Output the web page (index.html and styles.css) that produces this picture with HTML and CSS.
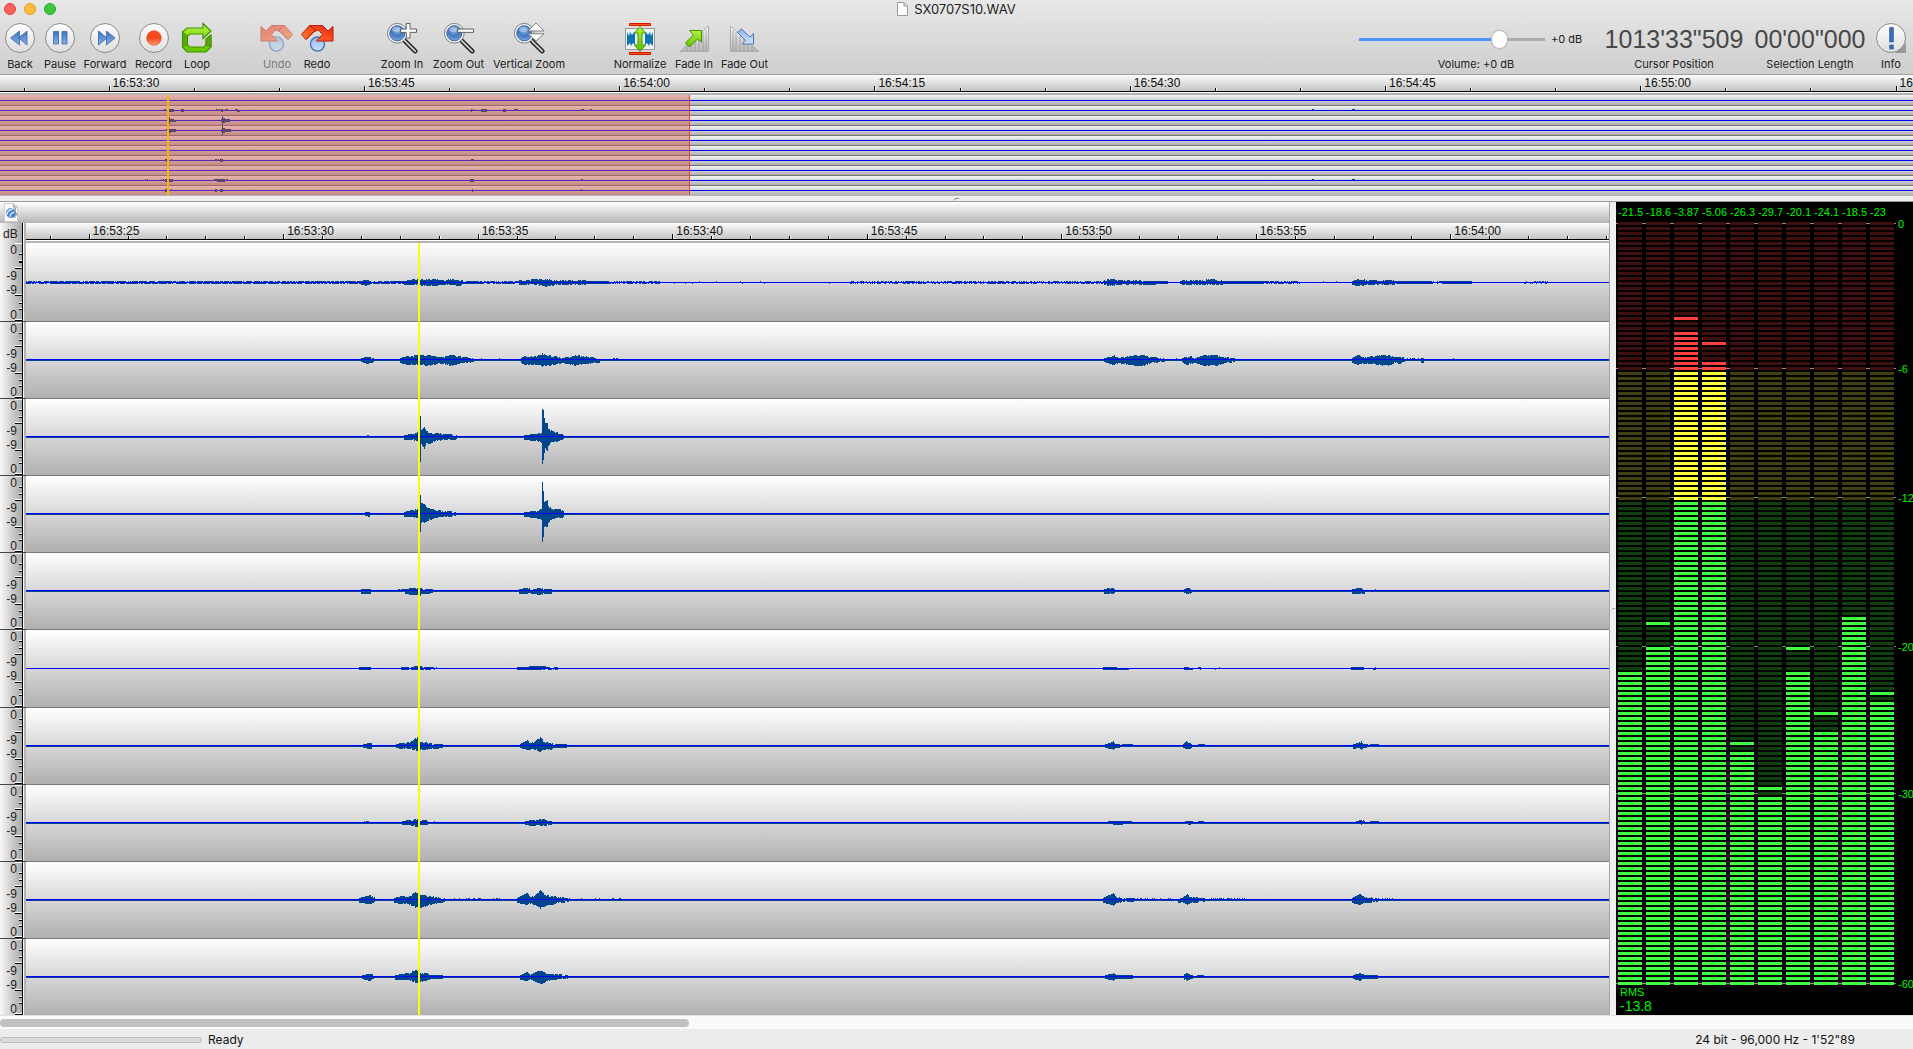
FILE: index.html
```html
<!DOCTYPE html>
<html lang="en">
<head>
<meta charset="utf-8">
<title>SX0707S10.WAV</title>
<link rel="stylesheet" href="styles.css">
</head>
<body>
<svg class="defs" aria-hidden="true">
  <defs>
    <linearGradient id="g-btn" x1="0" y1="0" x2="0" y2="1"><stop offset="0" stop-color="#fff"/><stop offset="1" stop-color="#dedede"/></linearGradient>
    <linearGradient id="g-blue" x1="0" y1="0" x2="0" y2="1"><stop offset="0" stop-color="#3f73bd"/><stop offset="1" stop-color="#86b1ea"/></linearGradient>
    <linearGradient id="g-sky" x1="0" y1="0" x2="0" y2="1"><stop offset="0" stop-color="#8db4ec"/><stop offset="1" stop-color="#cfe3fb"/></linearGradient>
    <linearGradient id="g-rec" x1="0" y1="0" x2="0" y2="1"><stop offset="0" stop-color="#ff4a1c"/><stop offset=".5" stop-color="#f0481e"/><stop offset="1" stop-color="#ffa06c"/></linearGradient>
    <linearGradient id="g-red" x1="0" y1="0" x2="1" y2="1"><stop offset="0" stop-color="#e02412"/><stop offset=".6" stop-color="#ff5a1e"/><stop offset="1" stop-color="#ff8a3a"/></linearGradient>
    <linearGradient id="g-green" x1="0" y1="0" x2="0" y2="1"><stop offset="0" stop-color="#b6f23e"/><stop offset="1" stop-color="#5fc400"/></linearGradient>
    <linearGradient id="g-ramp" x1="0" y1="0" x2="0" y2="1"><stop offset="0" stop-color="#fafafa"/><stop offset="1" stop-color="#b5b5b5"/></linearGradient>
    <radialGradient id="g-lens" cx=".5" cy=".3" r=".8"><stop offset="0" stop-color="#7fa9e2"/><stop offset=".5" stop-color="#4376be"/><stop offset="1" stop-color="#8dbcf2"/></radialGradient>
    <symbol id="i-undo" viewBox="0 0 34 32">
      <circle cx="16.500" cy="22" r="7" fill="url(#g-sky)" stroke="#4d79b8" stroke-width="1.500"/>
      <path d="M11.500 3.500h13l8 9-4.500 5-8-8-4.500-1.500-4 4.500 6 6.500H1V4.500l5 4.500z" fill="url(#g-red)" stroke="#b81a10"/>
      <path d="M24.500 3.500L18 8.500l2 1 8 8M6 9l5.500-5.500" fill="none" stroke="#b81a10"/>
    </symbol>
    <symbol id="i-lens" viewBox="0 0 34 34">
      <path d="M20 20l11 11" stroke="#222" stroke-width="5" stroke-linecap="round"/>
      <path d="M19 19l12 12" stroke="#ccc" stroke-width="2" stroke-linecap="round"/>
      <circle cx="12" cy="12" r="10.500" fill="#f2f2f2" stroke="#777"/>
      <circle cx="12" cy="12" r="8" fill="url(#g-lens)" stroke="#355f9f"/>
      <ellipse cx="11" cy="8" rx="4.500" ry="3" fill="#fff" opacity=".35"/>
    </symbol>
  </defs>
</svg>

<header class="header">
  <div class="titlebar">
    <div class="lights">
      <button class="light light-close" aria-label="Close"></button>
      <button class="light light-min" aria-label="Minimize"></button>
      <button class="light light-max" aria-label="Zoom window"></button>
    </div>
    <h1 class="title">
      <svg width="11" height="14" viewBox="0 0 11 14"><path d="M.5.5h6.500l3.500 3.500v9.500H.5z" fill="#fff" stroke="#999"/><path d="M7 .5V4h3.500" fill="#ddd" stroke="#999"/></svg>
      SX0707S10.WAV
    </h1>
  </div>
  <div class="toolbar">
    <div class="group group-transport">
      <button class="tool"><svg width="32" height="32" viewBox="0 0 32 32"><circle cx="16" cy="16" r="14.500" fill="url(#g-btn)" stroke="#8a8a8a"/><path d="M15.500 9v14l-9-7zM23 9v14l-8.500-7z" fill="url(#g-blue)" stroke="#3866ab" stroke-width=".8"/></svg>Back</button>
      <button class="tool"><svg width="32" height="32" viewBox="0 0 32 32"><circle cx="16" cy="16" r="14.500" fill="url(#g-btn)" stroke="#8a8a8a"/><path d="M9.500 9.500h5v12.500h-5zM18 9.500h5v12.500h-5z" fill="url(#g-blue)" stroke="#3866ab" stroke-width=".8"/></svg>Pause</button>
      <button class="tool"><svg width="32" height="32" viewBox="0 0 32 32"><circle cx="16" cy="16" r="14.500" fill="url(#g-btn)" stroke="#8a8a8a"/><path d="M9.500 9v14l8.500-7zM17.500 9v14l8.500-7z" fill="url(#g-blue)" stroke="#3866ab" stroke-width=".8"/></svg>Forward</button>
      <button class="tool"><svg width="32" height="32" viewBox="0 0 32 32"><circle cx="16" cy="16" r="14.500" fill="url(#g-btn)" stroke="#8a8a8a"/><circle cx="16" cy="16" r="7.300" fill="url(#g-rec)" stroke="#d9431c" stroke-width=".6"/></svg>Record</button>
      <button class="tool"><svg width="32" height="32" viewBox="0 0 32 32"><path d="M6 6h16V1.500L30 9l-8 7.500V12H9L6.500 14v9L9 25h14l2-2v-6l5-4v12l-5 5H6l-4.500-5V10z" fill="url(#g-green)" stroke="#3f9400" stroke-width="1.200"/><path d="M1.500 10l5 4v9l-5 2zM25 17l5-4v12l-5-2z" fill="#58a80c" stroke="#3f8a00" stroke-width=".7"/></svg>Loop</button>
    </div>
    <div class="group group-history">
      <button class="tool" disabled><svg width="34" height="32"><use href="#i-undo"/></svg>Undo</button>
      <button class="tool"><svg width="34" height="32" viewBox="0 0 34 32"><g transform="translate(34 0) scale(-1 1)"><use href="#i-undo" width="34" height="32"/></g></svg>Redo</button>
    </div>
    <div class="group group-zoom">
      <button class="tool"><svg width="34" height="32" viewBox="0 0 34 34"><use href="#i-lens" width="34" height="34"/><path d="M21.500 1.500h4v6h7v3.500h-7v6h-4v-6h-6V7.500h6z" fill="#fff" stroke="#555"/></svg>Zoom In</button>
      <button class="tool"><svg width="34" height="32" viewBox="0 0 34 34"><use href="#i-lens" width="34" height="34"/><path d="M15.500 7.500h17V11h-17z" fill="#fff" stroke="#555"/></svg>Zoom Out</button>
      <button class="tool"><svg width="34" height="32" viewBox="0 0 34 34"><use href="#i-lens" width="34" height="34"/><path d="M16 9.500l8.500-8.500L33 9.500zM16 12.500h17L24.500 20z" fill="#fff" stroke="#777"/></svg>Vertical Zoom</button>
    </div>
    <div class="group group-process">
      <button class="tool"><svg width="32" height="34" viewBox="0 0 32 34"><rect x="1.500" y="6.500" width="29" height="21" fill="#eef3f6" stroke="#999"/><path d="M3 10l2 4 1-4 2 3 2-3 1 2v11l-2-2-2 3-1-3-3 3zM29 10l-2 4-1-4-2 3-2-3-1 2v11l2-2 2 3 1-3 3 3z" fill="#0d75b0"/><path d="M16 4.500l5.500 6.500H18v12h3.500L16 29.500 10.500 23H14V11h-3.500z" fill="url(#g-green)" stroke="#3f9400"/><path d="M5.500 1.500h21v2h-21zM5.500 30.500h21v2h-21z" fill="#ff5a20" stroke="#d41500"/></svg>Normalize</button>
      <button class="tool"><svg width="32" height="32" viewBox="0 0 32 32"><path d="M2 29.500L30.500 4v25.500z" fill="url(#g-ramp)" stroke="#aaa"/><path d="M9 24v5M13 20v9M17 17v12M21 14v15M25 10v19M28 8v21" stroke="#999" stroke-width=".8"/><path d="M7.500 21l8-8-4-4.500H23.500V20l-4-3-8 8z" fill="url(#g-green)" stroke="#3f9400"/></svg>Fade In</button>
      <button class="tool"><svg width="32" height="32" viewBox="0 0 32 32"><path d="M30 29.500L1.500 4v25.500z" fill="url(#g-ramp)" stroke="#aaa"/><path d="M4 8v21M7 10v19M11 14v15M15 17v12M19 20v9M23 24v5" stroke="#999" stroke-width=".8"/><path d="M8.500 10.500l4-3.500 8.500 8 3.500-3.500V22H13l3.500-3.500z" fill="url(#g-sky)" stroke="#4d79b8"/></svg>Fade Out</button>
    </div>
    <div class="group group-status">
      <div class="volume">
        <div class="volume-row"><input class="slider" id="volume" type="range" min="0" max="1000" value="775"><output for="volume">+0 dB</output></div>
        <label for="volume">Volume: +0 dB</label>
      </div>
      <div class="readout"><span class="digits">1013'33"509</span>Cursor Position</div>
      <div class="readout"><span class="digits">00'00"000</span>Selection Length</div>
      <button class="tool"><svg width="32" height="32" viewBox="0 0 32 32"><path d="M31 21v10H20z" fill="#999"/><circle cx="16" cy="16" r="14.500" fill="url(#g-btn)" stroke="#8a8a8a"/><path d="M14.500 5.500h4v14.500h-4zM14.500 23h4v4h-4z" fill="#3b6cb8" stroke="#2f5ca4" stroke-width=".6"/></svg>Info</button>
    </div>
  </div>
</header>

<section class="overview" aria-label="Overview">
  <div class="ruler" id="ruler-overview"></div>
  <div class="lanes-mini" id="lanes-mini">
    <div class="selection"></div>
    <div class="cursor cursor-mini"></div>
  </div>
</section>
<div class="split-h"><svg width="7" height="4" viewBox="0 0 7 4"><path d="M0 4q2-4 5-3l2 1H3z" fill="#888"/></svg></div>

<main class="main">
  <section class="editor" aria-label="Tracks">
    <div class="strip"><button class="strip-button" aria-label="Track options"><svg width="14" height="19" viewBox="0 0 14 19"><path d="M.5.500h9L13.500 4v14.500H.5z" fill="#fff" stroke="#ccc"/><path d="M9.500.5V4h4" fill="#ddd" stroke="#aaa"/><circle cx="7" cy="10" r="5" fill="#3f83d2"/><path d="M3 12q0-5 6-6M6 14q0-4 5-5" stroke="#dceafb" stroke-width="1.300" fill="none"/><path d="M9 3l3 3-2 3 3 2-3 4" stroke="#888" fill="none"/></svg></button></div>
    <div class="editor-ruler"><div class="unit">dB</div><div class="ruler" id="ruler-main"></div></div>
    <div class="editor-body">
      <div class="scales rows" id="scales"></div>
      <div class="lanes rows" id="lanes"><div class="cursor cursor-main"></div></div>
    </div>
  </section>
  <div class="split-v"><svg width="5" height="4" viewBox="0 0 7 4"><path d="M0 4q2-4 5-3l2 1H3z" fill="#888"/></svg></div>
  <aside class="meter" aria-label="Level meter">
    <div class="peaks" id="peaks"></div>
    <div class="bars" id="bars"></div>
    <div class="rms">RMS</div>
    <div class="rms-value">-13.8</div>
  </aside>
</main>

<div class="scroller"><div class="thumb"></div></div>
<footer class="footer">
  <progress class="progress" value="0" max="1" aria-label="Progress"></progress>
  <span class="state">Ready</span>
  <span class="format">24 bit - 96,000 Hz - 1'52"89</span>
</footer>
<script src="app.js"></script>
</body>
</html>
```

FILE: styles.css
```css
* { box-sizing: border-box; }
body {
  margin: 0;
  height: 100vh;
  display: flex;
  flex-direction: column;
  overflow: hidden;
  background: #ececec;
  color: #222;
  font: 11px/14px Inter, "Liberation Sans", sans-serif;
}
button { border: 0; padding: 0; background: none; font: inherit; color: inherit; }
svg { display: block; flex: none; }
.defs { position: absolute; width: 0; height: 0; }

/* Header */
.header {
  flex: none;
  background: linear-gradient(#e8e8e8, #cecece);
  border-bottom: 1px solid #9f9f9f;
}
.titlebar { display: grid; grid-template-columns: 1fr auto 1fr; height: 18px; align-items: center; padding: 0 4px; }
.lights { display: flex; gap: 8px; }
.light { width: 12px; height: 12px; border-radius: 50%; border: 1px solid; }
.light-close { background: #fc605c; border-color: #e0443f; }
.light-min { background: #fdbc40; border-color: #dfa023; }
.light-max { background: #3cc840; border-color: #2aa82e; }
.title { margin: 0; display: flex; gap: 6px; align-items: center; font-size: 13px; font-weight: 400; }
.toolbar { display: flex; gap: 40px; height: 56px; padding-top: 4px; }
.group { display: grid; }
.group-transport { grid-template-columns: 40px 40px 50px 47px 40px; }
.group-history { grid-template-columns: 40px 40px; }
.group-zoom { grid-template-columns: 50px 63px 78px; }
.group-process { grid-template-columns: 64px 44px 57px; }
.group-status { grid-template-columns: 238px 154px 118px 44px; margin-left: auto; }
.tool, .readout, .volume { display: flex; flex-direction: column; align-items: center; justify-content: space-between; height: 49px; white-space: nowrap; }
.volume { width: 234px; }
.tool svg { margin-bottom: -2px; }
.tool:disabled { opacity: .5; }
.digits { font: 25px/34px "Liberation Sans", sans-serif; color: #484848; }
.volume-row { display: flex; align-items: center; gap: 6px; width: 100%; height: 34px; }
.slider { appearance: none; width: 186px; height: 18px; margin: 0; background: linear-gradient(90deg, #4a96ff 75%, #acacac 75%) center / 100% 3px no-repeat; }
.slider::-webkit-slider-thumb { appearance: none; width: 15px; height: 17px; border-radius: 8px; background: #fff; box-shadow: 0 0 1px 1px #b4b4b4; }

/* Rulers */
.ruler {
  display: flex;
  flex: 1;
  height: 20px;
  overflow: hidden;
  border-bottom: 2px solid #b3b3b3;
  background: linear-gradient(#fff, #fff) bottom / 100% 1px no-repeat, linear-gradient(#000, #000) 0 16px / 100% 1px no-repeat, linear-gradient(#fcfcfc, #bdbdbd);
  color: #111;
  font: 12px/16px "Liberation Sans", sans-serif;
}
.tick {
  min-width: 0;
  height: 16px;
  text-indent: 4px;
  white-space: nowrap;
  background: linear-gradient(#000, #000) 0 100% / 1px 3px no-repeat, linear-gradient(#fff, #fff) 1px 100% / 1px 3px no-repeat;
}
.tick-major { background-size: 1px 5px, 1px 5px; }
.lead { height: 16px; }

/* Overview */
.overview { flex: none; }
.lanes-mini { position: relative; background: #b5b5b5; }
.mini { display: flex; align-items: flex-end; height: 10px; border-bottom: 1px solid #757575; background: linear-gradient(#f4f4f4, #b0b0b0); }
.selection + .cursor + .mini { height: 11px; }
.mini:last-child { border-color: #b5b5b5; }
.mini svg { width: 100%; height: 9px; overflow: visible; }
.selection { position: absolute; inset: 0 auto 1px 0; width: calc(36% + 1px); background: rgba(216, 88, 80, .42); border-right: 1px solid #d24b3e; z-index: 1; }
.cursor { position: absolute; top: 0; bottom: 0; width: 2px; z-index: 2; }
.cursor-mini { left: 8.730%; bottom: 1px; background: #f5b800; }
.cursor-main { left: 24.760%; background: #ff0; }
.split-h { flex: none; height: 6px; display: flex; justify-content: center; padding-top: 1px; background: #efefef; border-bottom: 1px solid #999; }

/* Editor */
.main { flex: 1; min-height: 0; display: flex; }
.editor { flex: 1; min-width: 0; display: flex; flex-direction: column; }
.strip { height: 21px; padding: 1px 4px; background: linear-gradient(#fff, #b4b4b4); }
.editor-ruler { display: flex; flex: none; }
.editor-ruler .ruler { min-width: 0; }
.unit { width: 26px; padding: 3px 0 0 3px; font: 12px/16px "Liberation Sans", sans-serif; }
.unit, .scales { background: linear-gradient(90deg, #f8f8f8, #aaa 22px, #000 22px 23px, #fff 23px 24px, #b3b3b3 24px); }
.editor-body { flex: 1; min-height: 0; display: grid; grid-template-columns: 26px 1fr; }
.rows { position: relative; display: grid; grid-template-rows: 79fr 77fr 77fr 77fr 77fr 78fr 77fr 77fr 77fr 76fr; min-height: 0; }
.scale { display: flex; flex-direction: column; justify-content: space-between; min-height: 0; padding: 1px 9px 0 0; border-bottom: 1px solid #444; text-align: right; font: 12px/12px "Liberation Sans", sans-serif; position: relative; }
.scale-mid { line-height: 14px; }
.scale svg { position: absolute; left: 15px; top: 0; width: 7px; height: 100%; }
.lane { min-width: 0; min-height: 0; display: flex; align-items: flex-end; border-bottom: 1px solid #7b7b7b; background: linear-gradient(#fff, #d8d8d8 48%, #b0b0b0); }
.scale:last-child, .lane:last-child { border-bottom: 0; }
.lane svg { width: 100%; height: 76px; }

/* Meter */
.split-v { width: 7px; display: flex; align-items: center; padding-left: 1px; background: #efefef; border-left: 1px solid #a5a5a5; }
.meter { width: 297px; overflow: hidden; background: #000; color: #00f400; font: 11px/14px "Liberation Sans", sans-serif; }
.peaks { display: grid; grid-template-columns: repeat(10, 28px); height: 20px; padding: 3px 0 0 2px; white-space: nowrap; }
.bars { position: relative; display: flex; gap: 4px; height: 763px; padding-left: 2px; }
.bar { position: relative; width: 24px; background: linear-gradient(#401010 150px, #404010 150px 280px, #104010 280px); }
.lit { position: absolute; inset: 0; background: linear-gradient(#ff4040 150px, #ffff40 150px 280px, #40ff40 280px); }
.bar::after { content: ""; position: absolute; inset: 0; background: repeating-linear-gradient(transparent 0 3px, #000 3px 5px); }
.mark { position: absolute; left: 0; display: flex; align-items: center; height: 15px; white-space: nowrap; }
.mark::before { content: ""; width: 280px; height: 1px; margin-right: 2px; background: #8a8a8a; }
.rms { padding-left: 4px; }
.rms-value { padding-left: 4px; font-size: 14px; }

/* Bottom */
.scroller { flex: none; height: 14px; padding: 3px 0; background: #fafafa; border-top: 1px solid #e2e2e2; }
.thumb { width: 36%; height: 8px; border-radius: 4px; background: #c1c1c1; }
.footer { flex: none; display: flex; align-items: center; height: 20px; padding: 2px 58px 0 0; color: #111; font-size: 12px; }
.progress { appearance: none; width: 202px; height: 6px; margin-right: 6px; border: 1px solid #bebebe; border-radius: 3px; background: #dadada; }
.progress::-webkit-progress-bar { background: none; }
.state { flex: 1; }
```

FILE: app.js
```js
// Time rulers: equal cells, a label on every major one.
function buildRuler(id, lead, cell, total, majorEvery, labels) {
  const ruler = document.getElementById(id);
  const add = (cls, grow, text) => {
    const el = document.createElement('div');
    el.className = cls;
    el.style.flex = grow + ' 1 0';
    if (text) el.textContent = text;
    ruler.append(el);
  };
  add('lead', lead);
  let n = 0;
  for (let x = lead; x < total; x += cell, n++) {
    const major = n % majorEvery === 1;
    add(major ? 'tick tick-major' : 'tick', Math.min(cell, total - x), major ? labels.shift() : '');
  }
}
buildRuler('ruler-overview', 235, 851, 19130, 3, ['16:53:30', '16:53:45', '16:54:00', '16:54:15', '16:54:30', '16:54:45', '16:55:00', '16:55:15']);
buildRuler('ruler-main', 237, 389, 15830, 5, ['16:53:25', '16:53:30', '16:53:35', '16:53:40', '16:53:45', '16:53:50', '16:53:55', '16:54:00']);

// Small repeatable noise source.
let seed = 7;
const rnd = () => (seed = (seed * 16807) % 2147483647) / 2147483647;

// Each burst is a list of "x,up,down" key points; dots are "from,to,density".
const tracks = [
  { thin: 1, bursts: ['359,1,1 366,2,3 372,1,1', '404,1,2 414,3,2 422,3,3 435,3,3 442,2,2 450,3,2 458,2,3 466,1,1 478,1,1', '519,2,2 526,2,2 536,3,2 545,3,4 556,2,2 585,2,2 586,1,1 608,1,1', '1104,2,2 1110,3,3 1118,2,2 1140,2,2 1143,1,2 1168,1,1', '1180,1,1 1184,2,2 1200,2,2 1212,3,2 1221,2,2 1223,1,1 1260,1,1', '1352,1,2 1358,3,3 1370,2,2 1393,2,2 1396,1,1 1432,1,1', '1442,1,1 1472,1,1'], dots: ['26,360,.8', '372,404,.8', '478,520,.7', '608,660,.6', '660,830,.04', '850,1104,.55', '1260,1300,.6', '1300,1350,.05', '1432,1442,.5', '1524,1548,.4'] },
  { bursts: ['361,1,1 367,2,3 374,1,1', '400,1,2 408,3,4 420,4,4 430,4,5 437,2,3 443,2,3 450,4,5 458,3,3 463,2,2 474,1,2', '521,1,2 525,3,4 535,3,4 540,4,4 542,6,6 545,4,5 555,3,4 562,1,2 568,2,3 575,4,5 583,3,3 600,1,2', '1104,1,1 1110,2,3 1114,4,4 1119,1,2 1122,2,3 1130,3,4 1135,4,5 1144,4,5 1150,2,2 1165,1,1', '1182,1,1 1186,2,4 1190,3,3 1195,1,2 1204,4,5 1216,4,5 1222,2,3 1235,1,1', '1352,1,2 1358,4,4 1365,2,3 1372,3,3 1382,4,5 1388,4,5 1395,2,2 1400,2,3 1406,1,1', '1421,1,2 1424,1,2'], dots: ['474,500,.1', '612,618,.4', '1165,1182,.3', '1406,1424,.3', '1452,1454,.6'] },
  { bursts: ['404,1,2 412,2,2 418,4,4 419,5,5 420,20,24 421,6,6 424,9,11 426,5,5 430,3,6 435,3,3 445,2,2 457,1,2', '524,1,2 535,2,3 541,3,5 542,27,26 543,26,22 544,18,15 545,13,10 547,13,13 548,7,8 552,5,4 556,4,4 564,1,2'], dots: ['366,372,.5'] },
  { bursts: ['365,1,1 370,1,2', '404,1,2 412,3,2 418,4,4 419,5,5 420,18,17 421,10,8 424,9,8 427,5,6 435,3,3 445,2,2 457,1,1', '524,1,2 535,2,3 541,4,5 542,31,27 543,22,22 544,11,12 547,13,12 548,7,8 552,4,4 560,4,3 564,1,2'], dots: [] },
  { bursts: ['361,1,2 371,1,2', '405,1,2 413,2,3 419,2,4 426,1,2 433,1,1', '519,1,2 526,2,2 533,1,2 540,2,3 544,1,2 552,1,2', '1104,1,2 1109,2,2 1113,2,2 1116,1,1', '1184,1,1 1187,2,2 1192,1,2', '1352,1,2 1360,2,2 1365,1,2'], dots: ['398,405,.9', '1375,1376,1'] },
  { thin: 1, bursts: ['359,1,1 371,1,1', '401,1,1 409,1,1', '411,1,1 417,2,1 425,1,1 430,1,1', '517,1,1 541,2,1 552,1,1', '1103,1,1 1129,0,1', '1184,1,1 1193,0,1', '1351,1,1 1364,1,1', '1373,0,1 1376,1,1'], dots: ['430,437,.6', '553,558,.6', '1198,1201,.8', '1215,1220,.3'] },
  { bursts: ['363,1,1 370,2,2 372,1,1', '396,1,1 402,2,2 410,3,2 417,8,4 420,3,3 425,3,3 434,1,2 443,1,1', '520,1,1 527,5,3 530,2,3 535,4,3 540,8,5 544,3,3 550,2,3 555,1,1 567,1,1', '1105,1,1 1110,2,2 1113,4,3 1115,1,1 1120,1,1', '1122,1,0 1133,1,0', '1183,1,1 1186,4,2 1189,2,2 1192,1,1', '1198,1,0 1205,1,0', '1353,1,2 1358,2,1 1361,4,3 1364,1,1 1368,1,0', '1370,1,0 1379,1,0'], dots: [] },
  { bursts: ['402,1,1 409,2,1 417,3,3 420,1,1 424,2,1 428,1,1', '525,1,1 532,2,2 544,3,2 548,1,1 552,1,1', '1108,1,0 1113,1,1 1132,1,0', '1185,1,0 1188,1,1 1193,1,0', '1198,1,0 1204,1,0', '1356,1,0 1361,2,1 1366,1,0', '1370,1,0 1379,1,0'], dots: ['364,371,.4', '428,436,.4'] },
  { bursts: ['359,1,2 370,4,3 375,1,1', '394,1,2 402,3,3 408,2,3 415,7,7 420,4,7 430,3,4 436,2,3 445,1,1', '517,1,2 527,6,4 530,2,3 535,4,4 540,9,8 545,4,5 552,3,4 558,2,2 570,1,1', '1103,1,2 1109,4,3 1113,6,5 1116,2,2 1127,1,1 1134,1,1', '1178,0,2 1182,1,1 1187,5,4 1190,2,2 1205,1,1', '1352,1,2 1360,5,4 1364,2,2 1379,1,1'], dots: ['445,500,.25', '580,626,.2', '1134,1172,.45', '1210,1245,.4', '1380,1412,.15'] },
  { bursts: ['362,1,1 370,2,3 374,1,1', '395,1,2 408,3,2 416,6,5 420,3,4 426,3,3 432,1,1 443,1,1', '520,1,2 527,4,3 530,1,1 538,5,5 542,5,6 546,2,3 555,2,2 568,1,1', '1105,1,1 1110,2,2 1113,3,3 1116,1,1 1133,1,1', '1184,2,2 1187,3,3 1190,1,1 1193,1,1', '1197,1,0 1204,1,1', '1353,1,1 1360,3,3 1364,1,1 1378,1,1'], dots: [] }
];

function wavePath(track, mid) {
  let d = '';
  const col = (x, up, down) => { d += `M${x} ${mid - up}h1v${up + down + 1}h-1z`; };
  for (const burst of track.bursts) {
    const pts = burst.split(' ').map(p => p.split(',').map(Number));
    for (let i = 0; i < pts.length - 1; i++) {
      const [x0, u0, d0] = pts[i], [x1, u1, d1] = pts[i + 1];
      for (let x = x0; x < x1; x++) {
        const t = (x - x0) / (x1 - x0);
        const flat = u0 > 1 && t > 0;
        const up = Math.round(u0 + (u1 - u0) * t) - (flat && rnd() > .6 ? 1 : 0);
        const down = Math.round(d0 + (d1 - d0) * t) - (flat && rnd() > .6 ? 1 : 0);
        const extra = !track.thin && d0 ? 1 : 0;
        col(x, Math.max(0, up), Math.max(0, down) + extra);
      }
    }
  }
  for (const dot of track.dots) {
    const [a, b, density] = dot.split(',').map(Number);
    for (let x = a; x < b; x++) {
      if (rnd() < density) col(x, 1, 0);
      if (track.thin && rnd() < density) col(x, 0, 1);
    }
  }
  return d;
}

const lanes = document.getElementById('lanes');
const scales = document.getElementById('scales');
const scaleMarks = [[11, 3], [18, 3], [24, 7], [51, 7], [58, 3], [64, 3], [75, 7]];
tracks.forEach(track => {
  const mid = 37;
  lanes.insertAdjacentHTML('beforeend', `<div class="lane"><svg viewBox="26 0 1583 76" preserveAspectRatio="none" shape-rendering="crispEdges">
    <path d="${wavePath(track, mid)}" fill="#00468f"/>
    ${track.thin ? '' : `<path d="M26 ${mid + 1}h1583v1h-1583z" fill="#00468f"/>`}
    <path d="M26 ${mid}h1583v1h-1583z" fill="#0000ff"/></svg></div>`);
  scales.insertAdjacentHTML('beforeend', `<div class="scale"><span>0</span><span class="scale-mid">-9<br>-9</span><span>0</span>
    <svg viewBox="0 0 7 76" preserveAspectRatio="none" shape-rendering="crispEdges"><path d="M0 0h7v1H0z" fill="#fff"/>${scaleMarks.map(([y, w]) =>
      `<path d="M${7 - w} ${y - 1}h${w}v1h-${w}z" fill="#fff"/><path d="M${7 - w} ${y}h${w}v1h-${w}z" fill="#000"/>`).join('')}</svg></div>`);
});

// Overview: blocks of "x,width,up,down" for each lane.
const mini = ['',
  '164,2,1,0 168,6,1,1 181,3,1,1 216,2,1,0 219,1,1,0 221,2,1,1 225,3,1,0 235,3,1,0 237,3,0,1 471,1,1,1 473,1,1,0 481,6,1,1 503,3,1,1 514,4,1,0 581,3,1,0 590,2,1,0 1312,2,1,0 1352,3,1,0',
  '167,2,1,1 169,1,3,3 170,4,1,1 174,2,0,1 221,1,1,1 222,1,4,4 223,2,2,2 225,5,1,1',
  '166,3,1,0 169,2,1,2 171,5,1,1 221,1,1,1 222,1,4,4 223,2,2,2 225,6,1,1',
  '', '',
  '165,2,1,0 166,1,0,1 171,1,1,0 215,2,1,0 218,1,1,0 220,3,1,1 471,3,1,0',
  '',
  '145,1,1,0 147,1,1,0 161,1,1,0 163,1,1,0 165,8,1,1 214,3,1,0 217,8,1,1 226,2,1,0 470,4,1,1 581,2,1,0 1312,2,1,0 1352,3,1,0',
  '165,2,1,1 171,1,1,0 215,2,1,1 220,3,1,1 472,1,1,1 581,1,1,0'];
document.getElementById('lanes-mini').insertAdjacentHTML('beforeend', mini.map(row => `<div class="mini"><svg viewBox="0 0 1913 9" preserveAspectRatio="none" shape-rendering="crispEdges">
  <path d="M0 4h1913v1H0z" fill="#0000ff"/><path fill="#003a80" d="${row && row.split(' ').map(b => {
    const [x, w, u, dn] = b.split(',').map(Number);
    return `M${x} ${4 - u}h${w}v${u + dn + 1}h-${w}z`;
  }).join('')}"/></svg></div>`).join(''));

// Level meter: peak text, first lit row, peak-hold row (rows are 5px apart).
const levels = [['-21.5', 90, 90], ['-18.6', 85, 80], ['-3.87', 22, 19], ['-5.06', 28, 24], ['-26.3', 106, 104], ['-29.7', 115, 113], ['-20.1', 90, 85], ['-24.1', 102, 98], ['-18.5', 79, 79], ['-23', 96, 94]];
const marks = [['0', 1], ['-6', 146], ['-12', 275], ['-20', 424], ['-30', 571], ['-60', 761]];
document.getElementById('peaks').innerHTML = levels.map(l => `<span>${l[0]}</span>`).join('');
document.getElementById('bars').innerHTML =
  marks.map(([t, y]) => `<div class="mark" style="top:${y - 7}px">${t}</div>`).join('') +
  levels.map(([, level, hold]) => `<div class="bar"><div class="lit" style="clip-path:inset(${level * 5}px 0 0 0)"></div><div class="lit" style="clip-path:inset(${hold * 5}px 0 ${763 - hold * 5 - 3}px 0)"></div></div>`).join('');
```
